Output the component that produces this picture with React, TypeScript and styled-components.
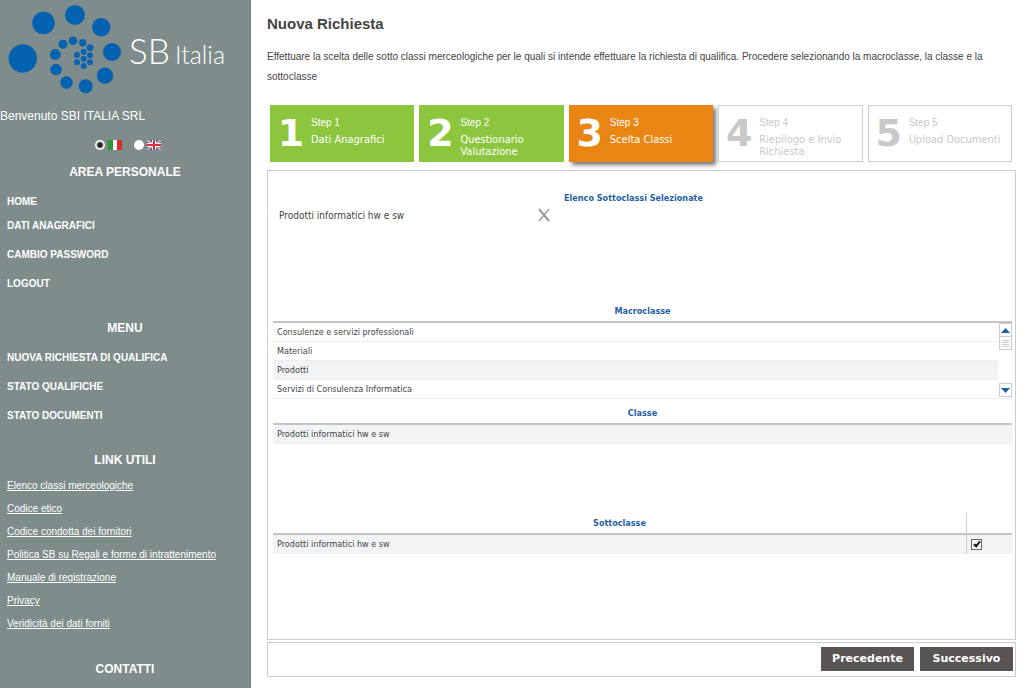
import React, { useState } from 'react';
import styled, { createGlobalStyle, css } from 'styled-components';

const sans = `'Liberation Sans', Arial, sans-serif`;
const tahoma = `'DejaVu Sans Condensed', 'DejaVu Sans', sans-serif`;
const verdana = `'DejaVu Sans', Verdana, sans-serif`;

const GlobalStyle = createGlobalStyle`
  *, *::before, *::after { box-sizing: border-box; }
  body { margin: 0; background: #fff; color: #444; font-family: ${sans}; font-size: 10px; }
  h1, h2, p, ul, ol { margin: 0; padding: 0; }
  ul, ol { list-style: none; }
  button { cursor: pointer; }
`;

const Page = styled.div`
  display: grid;
  grid-template-columns: 251px minmax(0, 1fr);
  min-height: 100vh;
`;

/* Sidebar */
const Sidebar = styled.aside`
  background: #7e8c8b;
  border-right: 1px solid #748280;
  color: #fff;
`;

const Logo = styled.svg`
  display: block;
  width: 240px;
  height: 100px;
`;

const Welcome = styled.p`
  margin-top: 8px;
  font-size: 12px;
  line-height: 16px;
`;

const Languages = styled.div`
  display: flex;
  justify-content: center;
  gap: 12px;
  height: 14px;
  margin: 14px 0 12px 6px;
`;

const Language = styled.label`
  display: flex;
  align-items: center;
  gap: 3px;
`;

const Radio = styled.input`
  appearance: none;
  width: 10px;
  height: 10px;
  margin: 0;
  border-radius: 50%;
  background: #fff;
  &:checked { background: radial-gradient(circle, #222 0 2px, #fff 4px); }
`;

const Flag = styled.svg`
  display: block;
  width: 14px;
  height: 10px;
`;

const SideTitle = styled.h2`
  text-align: center;
  font-size: 12px;
  line-height: 16px;
`;

const Menu = styled.ul`
  padding: 14px 0 15px 7px;
  font-weight: bold;
`;

const MenuItem = styled.li<{ $tight?: boolean }>`
  padding-bottom: ${(p) => (p.$tight ? 8 : 13)}px;
  line-height: 16px;
`;

const MenuLink = styled.a`
  color: #fff;
  text-decoration: none;
`;

const Links = styled.ul`
  padding: 6px 0 26px 7px;
  line-height: 23px;
`;

const UsefulLink = styled.a`
  color: #fff;
`;

/* Main column */
const Main = styled.main`
  padding: 14px 8px 11px 16px;
`;

const Title = styled.h1`
  font-size: 15px;
  line-height: 20px;
`;

const Intro = styled.p`
  margin-top: 13px;
  line-height: 20px;
`;

const Steps = styled.ol`
  display: flex;
  gap: 5px;
  margin: 18px 4px 8px 3px;
`;

type StepState = 'done' | 'current' | 'todo';

const stepLook = {
  done: css`background: #8cc63f; border-color: #8cc63f; color: #fff;`,
  current: css`background: #e98512; border-color: #e98512; color: #fff; box-shadow: 3px 3px 4px #777;`,
  todo: css`background: #fff; border-color: #ccc; color: #c8c8c8;`,
};

const Step = styled.li<{ $state: StepState }>`
  display: flex;
  flex: 1 1 0;
  min-width: 0;
  height: 57px;
  border: 1px solid;
  ${(p) => stepLook[p.$state]}
`;

const StepNumber = styled.span`
  flex: none;
  width: 40px;
  text-align: center;
  font: bold 38px/55px ${verdana};
`;

const StepText = styled.div`
  padding-top: 11px;
`;

const StepName = styled.p`
  line-height: 12px;
`;

const StepLabel = styled.p`
  margin-top: 5px;
  font: 11px/12px ${tahoma};
`;

const Panel = styled.section`
  border: 1px solid #ccc;
  padding: 0 3px 0 5px;
  font-family: ${tahoma};
`;

const Selected = styled.div`
  height: 130px;
  padding-top: 18px;
`;

const SelectedTitle = styled.h2`
  margin-right: 18px;
  text-align: center;
  color: #1f5fa8;
  font-size: 9px;
  line-height: 18px;
`;

const SelectedRow = styled.div`
  display: grid;
  grid-template-columns: 258px 14px;
  align-items: center;
  height: 16px;
  padding-left: 6px;
`;

const RemoveButton = styled.button`
  display: block;
  width: 14px;
  height: 14px;
  padding: 0;
  border: 0;
  background: none;
  color: #999;
  & svg { display: block; }
`;

const GridArea = styled.div<{ $height: number }>`
  display: grid;
  grid-template-columns: minmax(0, 1fr) auto;
  align-items: start;
  min-height: ${(p) => p.$height}px;
`;

const Table = styled.table`
  grid-column: 1 / -1;
  grid-row: 1;
  width: 100%;
  border-spacing: 0;
  table-layout: fixed;
  font-size: 9px;
  line-height: 12px;
`;

const Head = styled.th`
  height: 22px;
  padding: 0;
  border-bottom: 2px solid #c4c4c4;
  color: #1f5fa8;
  text-align: center;
`;

const Cell = styled.td<{ $active?: boolean }>`
  height: 19px;
  padding: 0 4px;
  border-bottom: 1px solid #eee;
  background: ${(p) => (p.$active ? '#f2f3f4' : '#fff')};
`;

const CheckHead = styled(Head)`
  width: 46px;
  border-left: 1px solid #ccc;
`;

const CheckCell = styled(Cell)`
  border-left: 1px solid #ccc;
`;

const Check = styled.input`
  appearance: none;
  display: block;
  width: 11px;
  height: 11px;
  margin: 0;
  border: 1px solid #666;
  background: #fff;
  &:checked::before {
    content: '';
    display: block;
    width: 4px;
    height: 7px;
    margin-left: 3px;
    border: solid #111;
    border-width: 0 2px 2px 0;
    transform: rotate(40deg);
  }
`;

const ScrollBar = styled.div`
  grid-column: 2;
  grid-row: 1;
  z-index: 1;
  display: flex;
  flex-direction: column;
  width: 14px;
  height: 74px;
  margin-top: 22px;
  padding-left: 1px;
  background: #fff;
`;

const ScrollButton = styled.button`
  display: grid;
  place-items: center;
  width: 13px;
  height: 14px;
  padding: 0;
  border: 1px solid #ccc;
  background: #fff;
  color: #1f5fa8;
  &:last-child { margin-top: auto; }
`;

const Thumb = styled.div`
  display: grid;
  place-items: center;
  width: 13px;
  height: 13px;
  border: 1px solid #ccc;
  border-top: 0;
  color: #ccc;
`;

const Footer = styled.footer`
  display: flex;
  justify-content: flex-end;
  gap: 6px;
  margin-top: 2px;
  padding: 4px 2px 5px;
  border: 1px solid #ccc;
`;

const NavButton = styled.button`
  width: 93px;
  height: 24px;
  padding: 0;
  border: 0;
  background: #595554;
  color: #fff;
  font: bold 11px/24px ${verdana};
`;

const dots = [
  [22.8, 58.5, 14.2], [43.5, 23, 11.3], [75, 15, 10], [101.3, 27.3, 9.2], [112, 52, 9],
  [105, 75.7, 8.2], [85.7, 86.3, 7], [66.5, 82.5, 6.2], [56, 69.5, 5.8], [55.3, 54.5, 5.4],
  [63, 44.3, 4.5], [73, 40.7, 4.3], [82.7, 42.7, 3.7], [90, 47.7, 3.4], [77, 55, 3],
  [83.7, 51.7, 3], [90, 55.3, 3], [83.7, 58.7, 3], [77, 62.3, 3], [90, 62.3, 3], [83.7, 66, 3],
];

const steps: { label: string; state: StepState }[] = [
  { label: 'Dati Anagrafici', state: 'done' },
  { label: 'Questionario Valutazione', state: 'done' },
  { label: 'Scelta Classi', state: 'current' },
  { label: 'Riepilogo e Invio Richiesta', state: 'todo' },
  { label: 'Upload Documenti', state: 'todo' },
];

const macroclassi = ['Consulenze e servizi professionali', 'Materiali', 'Prodotti', 'Servizi di Consulenza Informatica'];

const usefulLinks = [
  'Elenco classi merceologiche', 'Codice etico', 'Codice condotta dei fornitori',
  'Politica SB su Regali e forme di intrattenimento', 'Manuale di registrazione', 'Privacy',
  'Veridicità dei dati forniti',
];

export default function App() {
  const [lang, setLang] = useState('it');
  const [macro, setMacro] = useState('Prodotti');
  const [checked, setChecked] = useState(true);

  return (
    <Page>
      <GlobalStyle />
      <Sidebar>
        <Logo viewBox="0 0 240 100" role="img" aria-label="SB Italia">
          <g fill="#0562b1">
            {dots.map(([x, y, r]) => <circle key={`${x}-${y}`} cx={x} cy={y} r={r} />)}
          </g>
          <g fill="#fff" fontFamily="Lato, sans-serif" fontWeight="300">
            <text x="129" y="64" fontSize="35">SB</text>
            <text x="175" y="64" fontSize="25">Italia</text>
          </g>
        </Logo>
        <Welcome>Benvenuto SBI ITALIA SRL</Welcome>
        <Languages>
          <Language>
            <Radio type="radio" name="lang" aria-label="Italiano" checked={lang === 'it'} onChange={() => setLang('it')} />
            <Flag viewBox="0 0 14 10" aria-hidden="true">
              <path fill="#2f9a3c" d="M0 0h5v10H0z" />
              <path fill="#fff" d="M5 0h4v10H5z" />
              <path fill="#dd2a2a" d="M9 0h5v10H9z" />
            </Flag>
          </Language>
          <Language>
            <Radio type="radio" name="lang" aria-label="English" checked={lang === 'en'} onChange={() => setLang('en')} />
            <Flag viewBox="0 0 14 10" aria-hidden="true">
              <path fill="#3b4a94" d="M0 0h14v10H0z" />
              <path stroke="#fff" strokeWidth="2" d="M0 0l14 10M14 0L0 10" />
              <path stroke="#d33a48" strokeWidth="0.8" d="M0 0l14 10M14 0L0 10" />
              <path stroke="#fff" strokeWidth="4" d="M7 0v10M0 5h14" />
              <path stroke="#d8303f" strokeWidth="2" d="M7 0v10M0 5h14" />
            </Flag>
          </Language>
        </Languages>
        <SideTitle>AREA PERSONALE</SideTitle>
        <Menu>
          <MenuItem $tight><MenuLink href="#home">HOME</MenuLink></MenuItem>
          <MenuItem><MenuLink href="#dati">DATI ANAGRAFICI</MenuLink></MenuItem>
          <MenuItem><MenuLink href="#password">CAMBIO PASSWORD</MenuLink></MenuItem>
          <MenuItem><MenuLink href="#logout">LOGOUT</MenuLink></MenuItem>
        </Menu>
        <SideTitle>MENU</SideTitle>
        <Menu>
          <MenuItem><MenuLink href="#nuova">NUOVA RICHIESTA DI QUALIFICA</MenuLink></MenuItem>
          <MenuItem><MenuLink href="#qualifiche">STATO QUALIFICHE</MenuLink></MenuItem>
          <MenuItem><MenuLink href="#documenti">STATO DOCUMENTI</MenuLink></MenuItem>
        </Menu>
        <SideTitle>LINK UTILI</SideTitle>
        <Links>
          {usefulLinks.map((l) => <li key={l}><UsefulLink href="#link">{l}</UsefulLink></li>)}
        </Links>
        <SideTitle>CONTATTI</SideTitle>
      </Sidebar>

      <Main>
        <Title>Nuova Richiesta</Title>
        <Intro>
          Effettuare la scelta delle sotto classi merceologiche per le quali si intende effettuare la richiesta di
          qualifica. Procedere selezionando la macroclasse, la classe e la sottoclasse
        </Intro>
        <Steps>
          {steps.map((s, i) => (
            <Step key={s.label} $state={s.state}>
              <StepNumber>{i + 1}</StepNumber>
              <StepText>
                <StepName>Step {i + 1}</StepName>
                <StepLabel>{s.label}</StepLabel>
              </StepText>
            </Step>
          ))}
        </Steps>

        <Panel>
          <Selected>
            <SelectedTitle>Elenco Sottoclassi Selezionate</SelectedTitle>
            <SelectedRow>
              <span>Prodotti informatici hw e sw</span>
              <RemoveButton type="button" aria-label="Rimuovi">
                <svg width="14" height="14" viewBox="0 0 14 14" fill="none" stroke="currentColor">
                  <path strokeWidth="2" d="M2 1l10 12" />
                  <path strokeWidth="1.2" d="M12 1L2 13" />
                </svg>
              </RemoveButton>
            </SelectedRow>
          </Selected>

          <GridArea $height={102}>
            <Table>
              <thead><tr><Head>Macroclasse</Head></tr></thead>
              <tbody>
                {macroclassi.map((m) => (
                  <tr key={m} onClick={() => setMacro(m)}><Cell $active={m === macro}>{m}</Cell></tr>
                ))}
              </tbody>
            </Table>
            <ScrollBar>
              <ScrollButton type="button" aria-label="Su">
                <svg width="9" height="5" viewBox="0 0 9 5"><path fill="currentColor" d="M4.500 0L9 5H0z" /></svg>
              </ScrollButton>
              <Thumb>
                <svg width="7" height="7" viewBox="0 0 7 7" stroke="currentColor"><path d="M0 .5h7M0 2.500h7M0 4.500h7M0 6.500h7" /></svg>
              </Thumb>
              <ScrollButton type="button" aria-label="Giù">
                <svg width="9" height="5" viewBox="0 0 9 5"><path fill="currentColor" d="M4.500 5L9 0H0z" /></svg>
              </ScrollButton>
            </ScrollBar>
          </GridArea>

          <GridArea $height={110}>
            <Table>
              <thead><tr><Head>Classe</Head></tr></thead>
              <tbody><tr><Cell $active>Prodotti informatici hw e sw</Cell></tr></tbody>
            </Table>
          </GridArea>

          <GridArea $height={126}>
            <Table>
              <thead><tr><Head>Sottoclasse</Head><CheckHead aria-label="Selezione" /></tr></thead>
              <tbody>
                <tr>
                  <Cell $active>Prodotti informatici hw e sw</Cell>
                  <CheckCell $active>
                    <Check
                      type="checkbox"
                      aria-label="Prodotti informatici hw e sw"
                      checked={checked}
                      onChange={(e) => setChecked(e.target.checked)}
                    />
                  </CheckCell>
                </tr>
              </tbody>
            </Table>
          </GridArea>
        </Panel>

        <Footer>
          <NavButton type="button">Precedente</NavButton>
          <NavButton type="button">Successivo</NavButton>
        </Footer>
      </Main>
    </Page>
  );
}
